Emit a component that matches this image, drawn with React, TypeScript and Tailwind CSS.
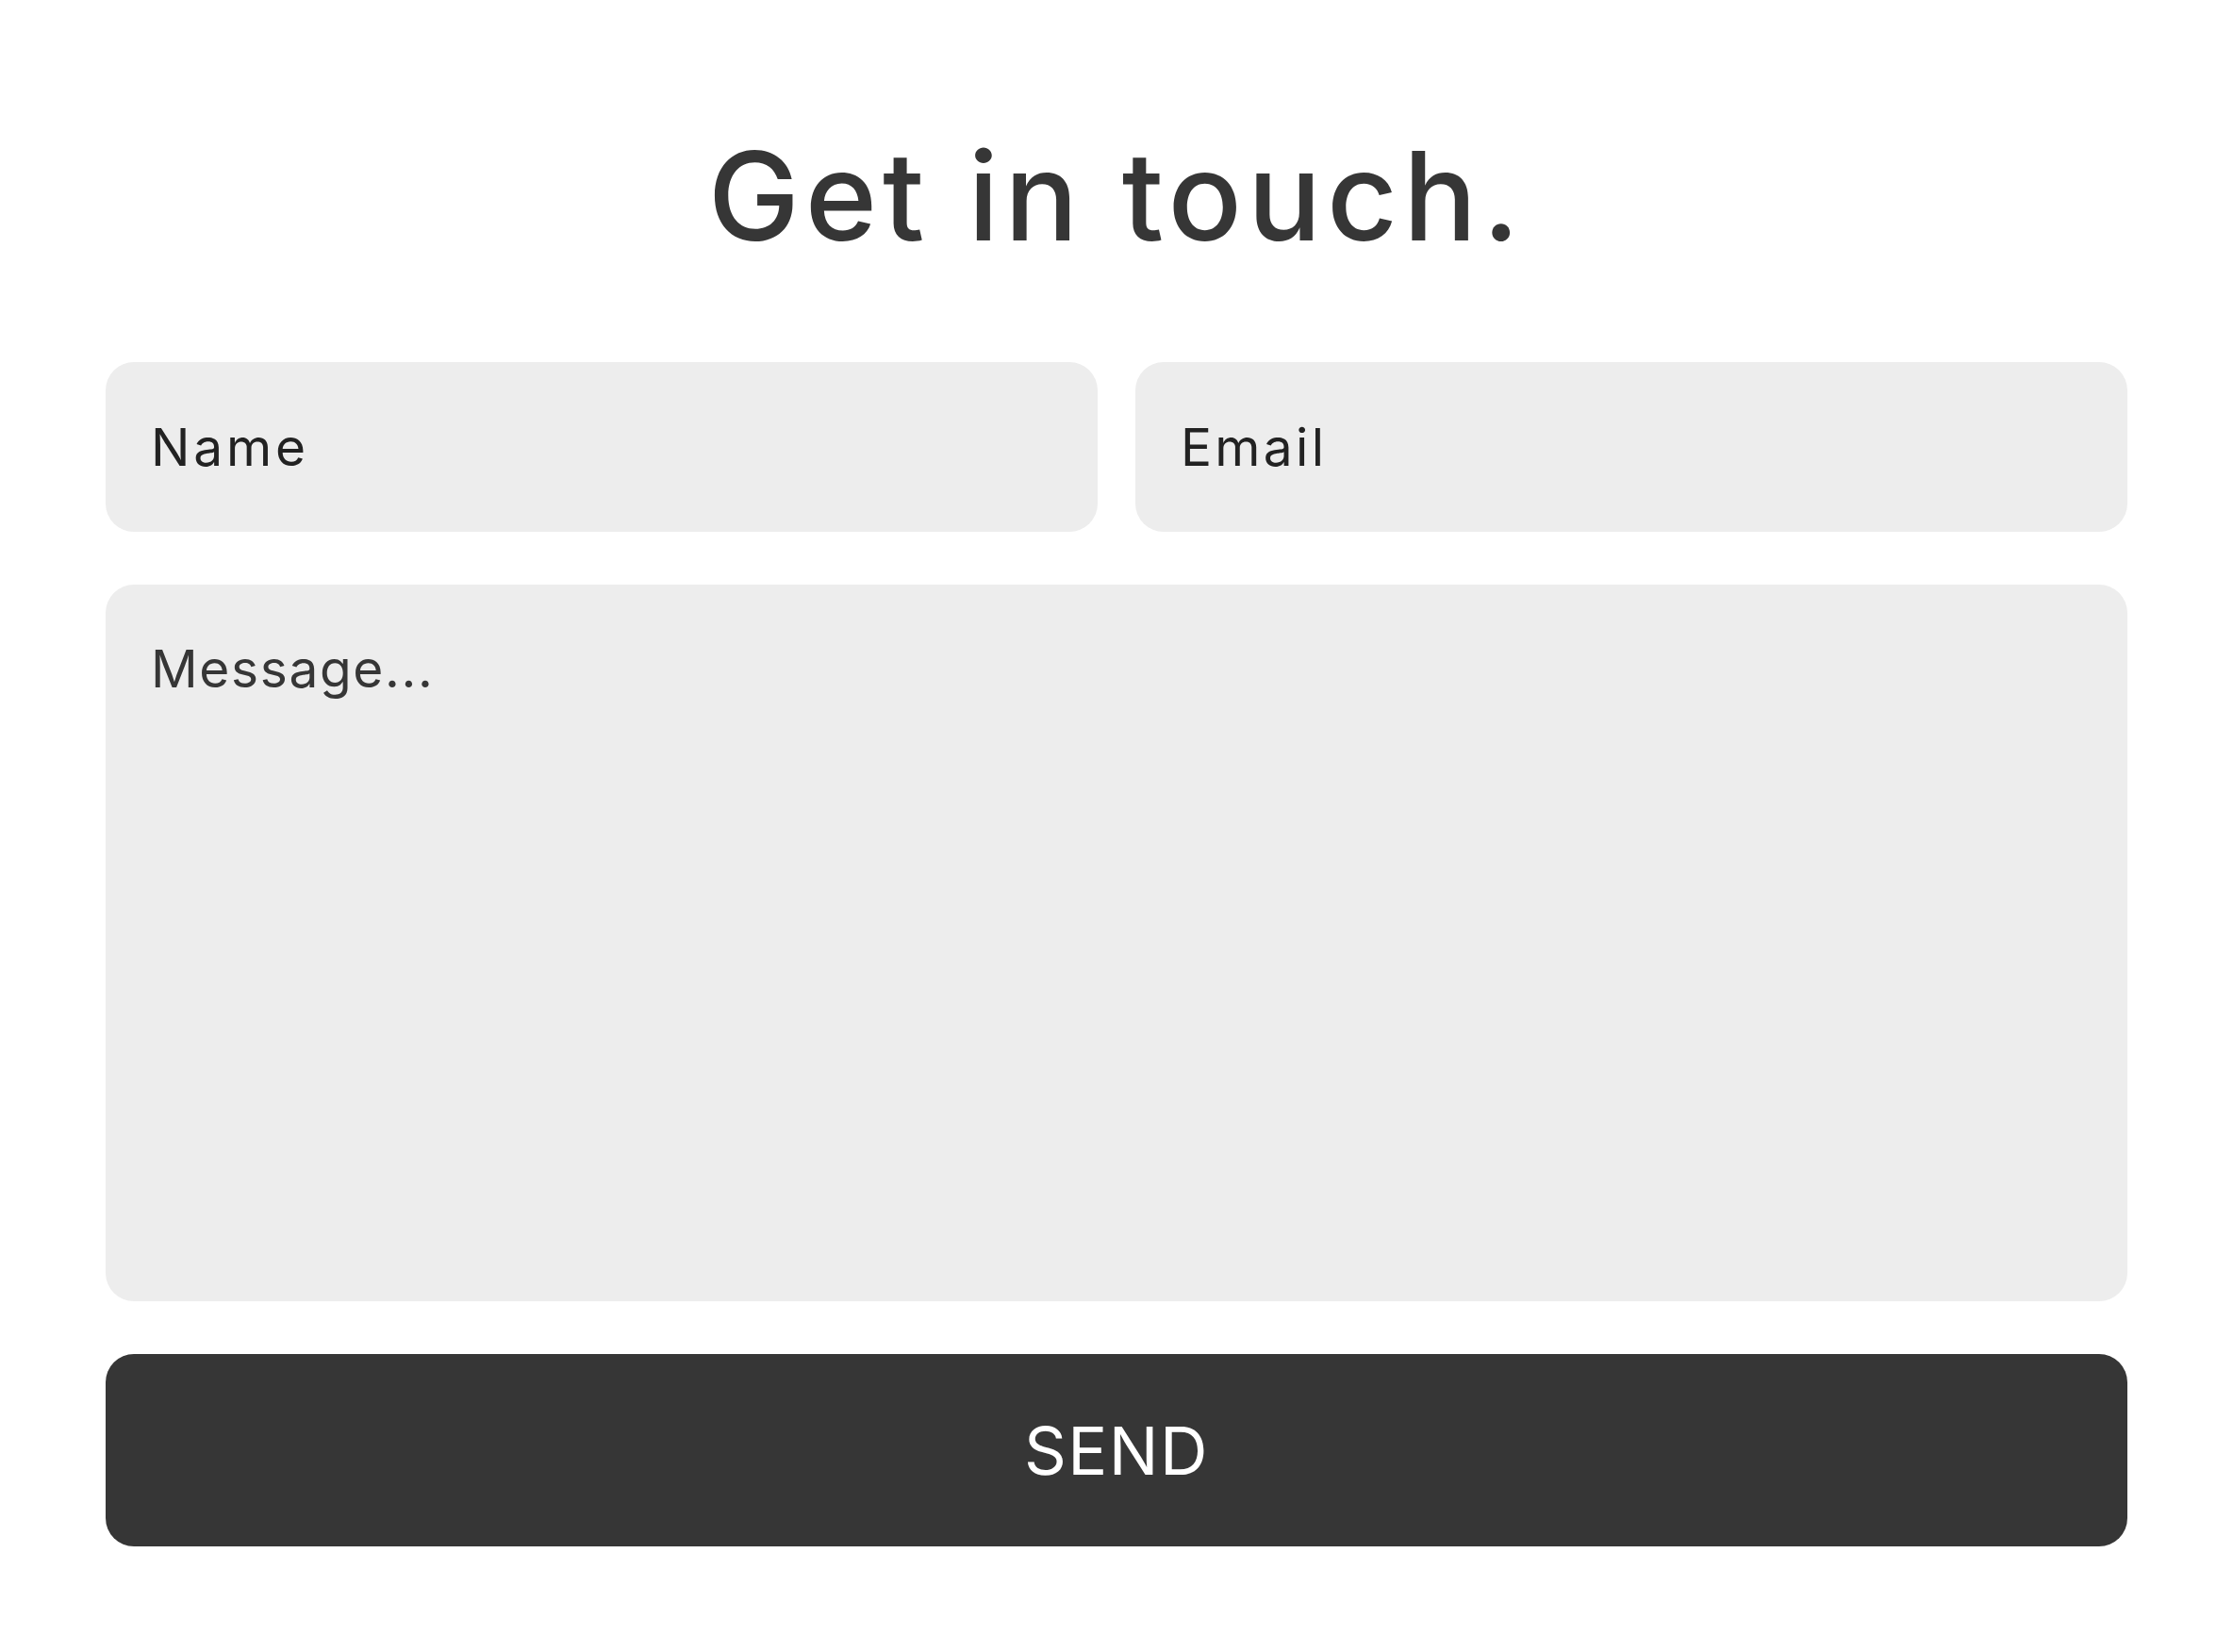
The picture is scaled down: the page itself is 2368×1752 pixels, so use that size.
export default function App() {
  return (
    <div className="min-h-screen w-full bg-white font-['Inter','Noto_Sans',sans-serif] text-[#363636]">
      <div className="mx-auto flex w-full flex-col px-[112px] pt-[143px]">
        <h1 className="text-center text-[130px] font-medium leading-none tracking-[0.045em]">
          Get in touch.
        </h1>
        <form className="mt-[111px] flex flex-col" onSubmit={(e) => e.preventDefault()}>
          <div className="grid grid-cols-2 gap-x-[40px]">
            <input
              type="text"
              placeholder="Name"
              className="h-[180px] rounded-[30px] bg-[#ededed] px-[48px] text-[55px] tracking-[0.07em] text-[#222] outline-none placeholder:text-[#222]"
            />
            <input
              type="email"
              placeholder="Email"
              className="h-[180px] rounded-[30px] bg-[#ededed] px-[48px] text-[55px] tracking-[0.06em] text-[#222] outline-none placeholder:text-[#222]"
            />
          </div>
          <textarea
            placeholder="Message..."
            className="mt-[56px] h-[760px] resize-none rounded-[30px] bg-[#ededed] p-[48px] text-[55px] leading-normal tracking-[0.03em] text-[#363636] outline-none placeholder:text-[#363636]"
          />
          <button
            type="submit"
            className="mt-[56px] h-[204px] rounded-[30px] bg-[#363636] text-[70px] font-normal tracking-[0.02em] text-white"
          >
            SEND
          </button>
        </form>
      </div>
    </div>
  );
}
